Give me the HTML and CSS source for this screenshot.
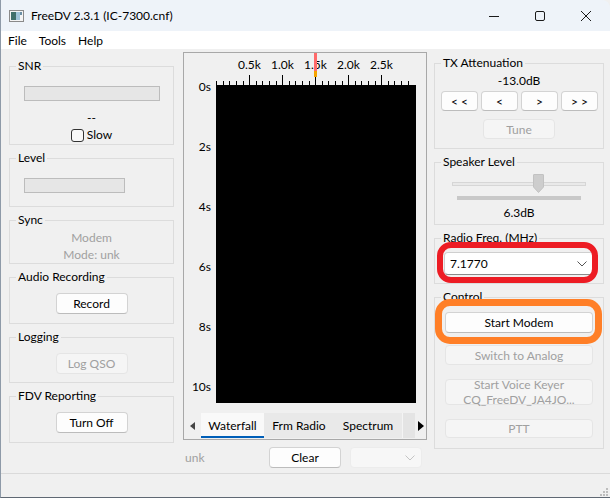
FILE: index.html
```html
<!DOCTYPE html>
<html lang="en">
<head>
  <meta charset="UTF-8" />
  <meta name="viewport" content="width=device-width, initial-scale=1" />
  <title>FreeDV 2.3.1 (IC-7300.cnf)</title>
  <link rel="stylesheet" href="styles.css">
</head>
<body>
  <div class="window">
    <header class="titlebar">
      <svg class="app-icon" width="15" height="12" viewBox="0 0 15 12">
        <rect x="0.5" y="0.5" width="14" height="11" fill="#f4f4f4" stroke="#8a8a8a" />
        <rect x="2" y="2" width="5" height="8" fill="#3f6f6a" />
        <rect x="7" y="2" width="4" height="8" fill="#9fc3d8" />
        <rect x="11" y="2" width="2" height="3" fill="#6b8fa5" />
      </svg>
      <span class="title">FreeDV 2.3.1 (IC-7300.cnf)</span>
      <div class="caption-buttons">
        <svg width="46" height="30" viewBox="0 0 46 30"><path d="M18 15.5H28" stroke="#1a1a1a" /></svg>
        <svg width="46" height="30" viewBox="0 0 46 30"><rect x="18.5" y="10.5" width="9" height="9" rx="1.5" fill="none" stroke="#1a1a1a" /></svg>
        <svg width="46" height="30" viewBox="0 0 46 30"><path d="M18 10L28 20M28 10L18 20" stroke="#1a1a1a" /></svg>
      </div>
    </header>

    <nav class="menubar">
      <span>File</span>
      <span>Tools</span>
      <span>Help</span>
    </nav>

    <main class="client">
      <!-- left column -->
      <section class="col-left">
        <fieldset class="group g-snr">
          <legend>SNR</legend>
          <div class="meter meter-wide"></div>
          <div class="snr-value">--</div>
          <label class="check"><span class="check-box"></span>Slow</label>
        </fieldset>

        <fieldset class="group g-level">
          <legend>Level</legend>
          <div class="meter meter-short"></div>
        </fieldset>

        <fieldset class="group g-sync">
          <legend>Sync</legend>
          <div class="muted">Modem</div>
          <div class="muted">Mode: unk</div>
        </fieldset>

        <fieldset class="group g-btn">
          <legend>Audio Recording</legend>
          <button class="btn">Record</button>
        </fieldset>

        <fieldset class="group g-btn g-log">
          <legend>Logging</legend>
          <button class="btn" disabled>Log QSO</button>
        </fieldset>

        <fieldset class="group g-btn">
          <legend>FDV Reporting</legend>
          <button class="btn">Turn Off</button>
        </fieldset>
      </section>

      <!-- waterfall / spectrum -->
      <section class="col-center">
        <div class="scope">
          <svg class="scale" width="242" height="32" viewBox="0 0 242 32">
            <g class="scale-labels">
              <text x="65.5" y="16">0.5k</text>
              <text x="98.5" y="16">1.0k</text>
              <text x="131.5" y="16">1.5k</text>
              <text x="164.5" y="16">2.0k</text>
              <text x="197.5" y="16">2.5k</text>
            </g>
            <path stroke="#000" d="M32.5 28V32M39.5 28V32M45.5 28V32M52.5 28V32M59.5 28V32M65.5 22V32M72.5 28V32M78.5 28V32M85.5 28V32M92.5 28V32M98.5 22V32M105.5 28V32M111.5 28V32M118.5 28V32M125.5 28V32M131.5 22V32M138.5 28V32M144.5 28V32M151.5 28V32M158.5 28V32M164.5 22V32M171.5 28V32M177.5 28V32M184.5 28V32M191.5 28V32M197.5 22V32M204.5 28V32M210.5 28V32M217.5 28V32M224.5 28V32" />
            <rect x="130" y="0" width="3" height="18" fill="#ff6a6a" />
            <rect x="130" y="18" width="3" height="6" fill="#f5a300" />
          </svg>
          <div class="scope-body">
            <div class="time-axis">
              <span>0s</span>
              <span>2s</span>
              <span>4s</span>
              <span>6s</span>
              <span>8s</span>
              <span>10s</span>
            </div>
            <div class="waterfall"></div>
          </div>
          <div class="tabs">
            <span class="tab-arrow left"></span>
            <span class="tab active">Waterfall</span>
            <span class="tab">Frm Radio</span>
            <span class="tab">Spectrum</span>
            <span class="tab tab-more"></span>
            <span class="tab-arrow right"></span>
          </div>
        </div>
        <div class="scope-footer">
          <span class="muted unk">unk</span>
          <button class="btn">Clear</button>
          <div class="combo combo-disabled">
            <svg width="10" height="6" viewBox="0 0 10 6"><path d="M0.5 0.5L5 5L9.5 0.5" fill="none" stroke="#c4c4c4" /></svg>
          </div>
        </div>
      </section>

      <!-- right column -->
      <section class="col-right">
        <fieldset class="group g-tx">
          <legend>TX Attenuation</legend>
          <div class="value">-13.0dB</div>
          <div class="step-row">
            <button class="btn step">&lt; &lt;</button>
            <button class="btn step">&lt;</button>
            <button class="btn step">&gt;</button>
            <button class="btn step">&gt; &gt;</button>
          </div>
          <button class="btn tune" disabled>Tune</button>
        </fieldset>

        <fieldset class="group g-speaker">
          <legend>Speaker Level</legend>
          <div class="slider">
            <div class="slider-track"></div>
            <svg class="slider-thumb" width="11" height="19" viewBox="0 0 11 19">
              <path d="M1 0.5H10A0.5 0.5 0 0 1 10.5 1V13L5.5 18.5L0.5 13V1A0.5 0.5 0 0 1 1 0.5Z" fill="#cdcdcd" stroke="#c2c2c2" />
            </svg>
          </div>
          <div class="level-bar"></div>
          <div class="value">6.3dB</div>
        </fieldset>

        <fieldset class="group g-freq">
          <legend>Radio Freq. (MHz)</legend>
          <div class="combo">
            <span>7.1770</span>
            <svg width="10" height="6" viewBox="0 0 10 6"><path d="M0.5 0.5L5 5L9.5 0.5" fill="none" stroke="#555" /></svg>
          </div>
        </fieldset>

        <fieldset class="group g-control">
          <legend>Control</legend>
          <button class="btn wide">Start Modem</button>
          <button class="btn wide analog" disabled>Switch to Analog</button>
          <button class="btn wide keyer" disabled><span>Start Voice Keyer</span><span>CQ_FreeDV_JA4JO...</span></button>
          <button class="btn wide ptt" disabled>PTT</button>
        </fieldset>
      </section>
    </main>

    <footer class="statusbar">
      <svg class="grip" width="9" height="9" viewBox="0 0 9 9" fill="#bdbdbd">
        <rect x="6" y="0" width="2" height="2" />
        <rect x="3" y="3" width="2" height="2" />
        <rect x="6" y="3" width="2" height="2" />
        <rect x="0" y="6" width="2" height="2" />
        <rect x="3" y="6" width="2" height="2" />
        <rect x="6" y="6" width="2" height="2" />
      </svg>
    </footer>

    <!-- hand-drawn highlights over the screenshot -->
    <div class="mark mark-red"></div>
    <div class="mark mark-orange"></div>
  </div>
</body>
</html>
```

FILE: styles.css
```css
body {
  margin: 0;
  width: 610px;
  height: 498px;
  overflow: hidden;
  background: #f0f0f0;
  font-family: Lato, "Noto Sans", sans-serif;
  font-size: 12px;
  color: #000;
}
.window {
  position: relative;
  width: 610px;
  height: 498px;
  box-sizing: border-box;
  border-left: 1px solid #8e9aa8;
  border-bottom: 1px solid #5f6873;
  border-top-right-radius: 8px;
  background: #f0f0f0;
  display: flex;
  flex-direction: column;
  overflow: hidden;
}

/* title + menu */
.titlebar {
  height: 31px;
  flex: none;
  display: flex;
  align-items: center;
  background: #eef3f9;
}
.app-icon {
  margin-left: 8px;
  margin-right: 7px;
}
.title {
  font-size: 12px;
  flex: 1;
}
.caption-buttons {
  display: flex;
  margin-right: 1px;
}
.menubar {
  height: 18px;
  flex: none;
  background: #fff;
  display: flex;
  align-items: center;
  padding-left: 7px;
}
.menubar span {
  margin-right: 12px;
}

/* main client area */
.client {
  height: 424px;
  flex: none;
  display: flex;
  align-items: flex-start;
}
.col-left {
  width: 165px;
  margin-left: 8px;
  margin-top: 9px;
  display: flex;
  flex-direction: column;
  gap: 5px;
}
.col-center {
  width: 244px;
  margin-left: 9px;
  margin-top: 3px;
}
.col-right {
  width: 170px;
  margin-left: 7px;
  margin-top: 6px;
  display: flex;
  flex-direction: column;
  gap: 5px;
}

/* group boxes */
.group {
  margin: 0;
  padding: 0 6px;
  min-width: 0;
  box-sizing: border-box;
  border: 1px solid #dcdcdc;
  display: flex;
  flex-direction: column;
  align-items: center;
}
.group legend {
  padding: 0 2px;
  line-height: 16px;
}
.g-snr { height: 87px; }
.g-level { height: 57px; }
.g-sync { height: 52px; }
.g-btn { height: 55px; }
.g-log { height: 54px; }

.meter {
  height: 15px;
  box-sizing: border-box;
  border: 1px solid #bcbcbc;
  background: #e6e6e6;
  align-self: flex-start;
}
.meter-wide {
  width: 136px;
  margin: 12px 0 0 8px;
}
.meter-short {
  width: 101px;
  margin: 12px 0 0 8px;
}
.snr-value {
  margin-top: 9px;
  line-height: 16px;
}
.check {
  display: flex;
  align-items: center;
  line-height: 16px;
  margin-top: 1px;
}
.check-box {
  width: 13px;
  height: 13px;
  box-sizing: border-box;
  border: 1px solid #333;
  border-radius: 3px;
  background: #f8f8f8;
  margin-right: 3px;
}
.muted {
  color: #a0a0a0;
}
.g-sync .muted {
  line-height: 17px;
}
.g-sync .muted:first-of-type {
  margin-top: 1px;
}

/* buttons */
.btn {
  font: inherit;
  color: #000;
  width: 72px;
  height: 21px;
  padding: 0;
  box-sizing: border-box;
  background: #fdfdfd;
  border: 1px solid #d3d3d3;
  border-bottom-color: #bcbcbc;
  border-radius: 4px;
}
.btn:disabled {
  color: #a0a0a0;
  background: #f5f5f5;
  border-color: #e5e5e5;
}
.g-btn .btn {
  margin-top: 8px;
}

/* scope panel */
.scope {
  height: 388px;
  box-sizing: border-box;
  border: 1px solid #a8a8a8;
}
.scale {
  display: block;
}
.scale-labels text {
  font-family: Lato, "Noto Sans", sans-serif;
  font-size: 12px;
  text-anchor: middle;
}
.scope-body {
  display: flex;
}
.time-axis {
  width: 32px;
  margin-top: -6px;
  display: flex;
  flex-direction: column;
  gap: 44px;
  align-items: flex-end;
  padding-right: 5px;
  box-sizing: border-box;
}
.time-axis span {
  line-height: 16px;
}
.waterfall {
  width: 200px;
  height: 318px;
  background: #000;
}
.tabs {
  margin-top: 10px;
  height: 25px;
  display: flex;
  align-items: stretch;
}
.tab {
  display: flex;
  align-items: center;
  justify-content: center;
  background: #e9e9e9;
}
.tab.active {
  width: 63px;
  background: #f9f9f9;
  box-shadow: inset 0 -2px 0 #005fb8;
}
.tab:nth-of-type(3) { width: 70px; }
.tab:nth-of-type(4) { width: 68px; }
.tab-more {
  width: 12px;
  border-left: 1px solid #f4f4f4;
  background: #e4e4e4;
}
.tab-arrow {
  display: flex;
  align-items: center;
  justify-content: center;
}
.tab-arrow.left {
  width: 17px;
}
.tab-arrow.left::before {
  content: "";
  border-top: 4px solid transparent;
  border-bottom: 4px solid transparent;
  border-right: 5px solid #444;
}
.tab-arrow.right {
  flex: 1;
  background: #f0f0f0;
}
.tab-arrow.right::before {
  content: "";
  border-top: 5px solid transparent;
  border-bottom: 5px solid transparent;
  border-left: 6px solid #000;
}
.scope-footer {
  margin-top: 7px;
  height: 21px;
  display: flex;
  align-items: center;
  padding-right: 5px;
}
.unk {
  flex: 1;
  margin-left: 2px;
}
.combo {
  height: 23px;
  box-sizing: border-box;
  display: flex;
  align-items: center;
  justify-content: space-between;
  padding: 0 6px 0 5px;
  background: #fff;
  border: 1px solid #cfcfcf;
  border-bottom-color: #8a8a8a;
  border-radius: 4px;
}
.combo-disabled {
  width: 72px;
  height: 21px;
  margin-left: 9px;
  justify-content: flex-end;
  background: #f7f7f7;
  border-color: #ececec;
}

/* right column */
.g-tx { height: 94px; }
.g-speaker { height: 71px; }
.g-freq { height: 54px; }
.g-control { height: 160px; }

.value {
  line-height: 16px;
  margin-top: 2px;
}
.step-row {
  margin-top: 2px;
  display: flex;
  gap: 3px;
  align-self: flex-start;
}
.btn.step {
  width: 37px;
  height: 20px;
}
.btn.tune {
  margin-top: 8px;
  height: 20px;
}
.slider {
  position: relative;
  width: 134px;
  height: 19px;
  margin-top: 4px;
  display: flex;
  align-items: center;
}
.slider-track {
  width: 100%;
  height: 4px;
  box-sizing: border-box;
  border: 1px solid #d6d6d6;
  background: #e9e9e9;
}
.slider-thumb {
  position: absolute;
  left: 81px;
  top: 0;
}
.level-bar {
  width: 124px;
  height: 4px;
  margin-top: 3px;
  background: #c8c8c8;
}
.g-speaker .value {
  margin-top: 5px;
}
.g-freq .combo {
  width: 150px;
  margin-top: 6px;
}
.btn.wide {
  width: 148px;
}
.g-control .btn:first-of-type {
  margin-top: 7px;
}
.btn.analog {
  margin-top: 12px;
  height: 20px;
}
.btn.keyer {
  margin-top: 14px;
  height: 26px;
  display: flex;
  flex-direction: column;
  align-items: center;
  justify-content: center;
}
.btn.keyer span {
  line-height: 15px;
}
.btn.ptt {
  margin-top: 14px;
  height: 19px;
}

/* status bar */
.statusbar {
  flex: 1;
  border-top: 1px solid #dadada;
  display: flex;
  justify-content: flex-end;
  align-items: flex-end;
}
.grip {
  margin: 0 1px 0 0;
}

/* highlight marks drawn over the window */
.mark {
  position: absolute;
  box-sizing: border-box;
}
.mark-red {
  left: 436px;
  top: 242px;
  width: 161px;
  height: 41px;
  border: 6px solid #ed1c24;
  border-radius: 14px;
}
.mark-orange {
  left: 434px;
  top: 299px;
  width: 167px;
  height: 45px;
  border: 7px solid #ff7f27;
  border-radius: 15px;
}
```
